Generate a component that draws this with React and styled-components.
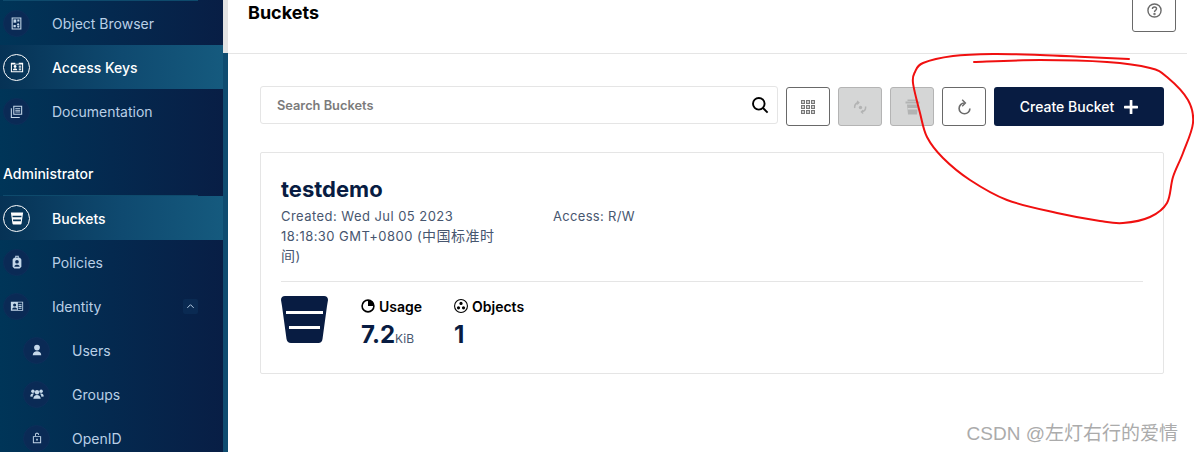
import React from "react";
import styled, { createGlobalStyle } from "styled-components";

const Global = createGlobalStyle`
  html, body { margin: 0; padding: 0; height: 452px; overflow: hidden; background: #fff; }
  * { box-sizing: border-box; }
  body { font-family: Inter, "Noto Sans CJK SC", sans-serif; }
`;

const Page = styled.div`
  display: flex;
  width: 1194px;
  height: 452px;
  overflow: hidden;
  position: relative;
  background: #fff;
`;

const Sidebar = styled.aside`
  flex: 0 0 228px;
  height: 452px;
  display: flex;
  background: #0f4c70;
`;

const SideInner = styled.nav`
  flex: 0 0 223px;
  height: 452px;
  overflow: hidden;
  background: linear-gradient(90deg, #003558 0%, #04294f 50%, #081e45 100%);
`;

const SideGutter = styled.div`
  flex: 1;
  height: 53px;
  background: #e3e3e3;
`;

const Rule = styled.div`
  height: 1px;
  width: 195px;
  margin-left: 3px;
  background: #0e4a6c;
`;

const Row = styled.div`
  height: 44px;
  display: flex;
  align-items: center;
  padding-left: ${(p) => (p.$sub ? 23 : 3)}px;
  background: ${(p) => (p.$active ? "linear-gradient(90deg, #063255 0%, #0f4a70 55%, #155a7e 100%)" : "transparent")};
  color: ${(p) => (p.$active ? "#ffffff" : "#b9cfe6")};
  font-size: 14px;
  font-weight: ${(p) => (p.$active ? 500 : 400)};
`;

const Badge = styled.span`
  flex: 0 0 27px;
  width: 27px;
  height: 27px;
  border-radius: 50%;
  display: flex;
  align-items: center;
  justify-content: center;
  margin-right: 22px;
  background: ${(p) => (p.$active ? "transparent" : "#0a2a55")};
  border: 1px solid ${(p) => (p.$active ? "#ffffff" : "#0c2f5a")};
  color: ${(p) => (p.$active ? "#ffffff" : "#c5d8ea")};
  svg { display: block; }
`;

const RowLabel = styled.span`
  flex: 1;
`;

const Chevron = styled.span`
  width: 15px;
  height: 15px;
  margin-right: 25px;
  border-radius: 2px;
  background: #0a2a52;
  display: flex;
  align-items: center;
  justify-content: center;
  color: #b9cfe6;
`;

const SectionLabel = styled.div`
  height: 62px;
  display: flex;
  align-items: flex-end;
  padding: 0 0 13px 3px;
  color: #fff;
  font-size: 14px;
  font-weight: 500;
`;

const Main = styled.main`
  flex: 1;
  min-width: 0;
  display: flex;
  flex-direction: column;
`;

const Header = styled.header`
  height: 54px;
  min-height: 54px;
  flex: none;
  width: 959px;
  border-bottom: 1px solid #e5e5e5;
  display: flex;
  align-items: flex-end;
  justify-content: space-between;
  padding: 0 11px 21px 20px;
`;

const Title = styled.h1`
  margin: 0;
  font-size: 18px;
  line-height: 22px;
  font-weight: 700;
  color: #000;
  align-self: flex-start;
  padding-top: 2px;
`;

const IconButton = styled.button`
  flex: 0 0 44px;
  width: 44px;
  height: ${(p) => p.$h || 39}px;
  padding: 0;
  border-radius: 3px;
  border: 1px solid ${(p) => (p.$disabled ? "#b4b4b4" : "#696969")};
  background: ${(p) => (p.$disabled ? "#d5d6d6" : "#fff")};
  color: ${(p) => (p.$disabled ? "#b2b3b3" : "#6b6b6b")};
  display: flex;
  align-items: center;
  justify-content: center;
`;

const Content = styled.div`
  padding: 32px 30px 0 32px;
  display: flex;
  flex-direction: column;
`;

const Toolbar = styled.div`
  display: flex;
  gap: 8px;
  height: 40px;
  width: 904px;
  align-items: flex-start;
`;

const Search = styled.div`
  flex: 0 0 518px;
  height: 38px;
  border: 1px solid #e5e5e5;
  border-radius: 3px;
  display: flex;
  align-items: center;
  justify-content: space-between;
  padding: 0 8px 0 16px;
  color: #7b7b7b;
  font-size: 12.8px;
  font-weight: 600;
`;

const ToolGroup = styled.div`
  display: flex;
  gap: 8px;
  margin-top: 1px;
`;

const CreateButton = styled.button`
  width: 170px;
  height: 39px;
  border: 0;
  border-radius: 3px;
  background: #081c42;
  color: #fff;
  font-family: inherit;
  font-size: 14px;
  font-weight: 500;
  display: flex;
  align-items: center;
  justify-content: center;
  gap: 10px;
  padding: 0;
`;

const Card = styled.section`
  width: 904px;
  height: 222px;
  margin-top: 26px;
  border: 1px solid #e5e5e5;
  border-radius: 2px;
  padding: 20px;
  color: #081c42;
`;

const BucketName = styled.h2`
  margin: 0;
  font-size: 22px;
  line-height: 32px;
  font-weight: 700;
  color: #081c42;
`;

const MetaRow = styled.div`
  display: flex;
  height: 76px;
  font-size: 13px;
  line-height: 20px;
  color: #47566f;
`;

const Created = styled.div`
  flex: 0 0 220px;
  margin-top: 1px;
  margin-right: 52px;
  letter-spacing: 0.45px;
`;

const Cjk = styled.span`
  font-size: 14px;
`;

const Access = styled.div`
  margin-top: 1px;
  letter-spacing: 0.32px;
`;

const StatsRow = styled.div`
  border-top: 1px solid #e5e5e5;
  display: flex;
  padding-top: 14px;
  height: 80px;
`;

const BucketArt = styled.div`
  flex: 0 0 47px;
  margin-right: 33px;
  color: #081c42;
`;

const Stat = styled.div`
  width: ${(p) => p.$w}px;
  display: flex;
  flex-direction: column;
`;

const StatLabel = styled.div`
  display: flex;
  align-items: center;
  gap: 4px;
  height: 20px;
  color: #000;
  font-size: 14px;
  font-weight: 600;
`;

const StatValue = styled.div`
  margin-top: 4px;
  font-size: 24px;
  line-height: 30px;
  font-weight: 700;
  color: #081c42;
  display: flex;
  align-items: baseline;
`;

const Unit = styled.span`
  font-size: 12px;
  font-weight: 400;
  color: #47566f;
`;

const Annotation = styled.svg`
  position: absolute;
  left: 0;
  top: 0;
  pointer-events: none;
`;

const Watermark = styled.div`
  position: absolute;
  right: 16px;
  bottom: 6px;
  font-family: "Liberation Sans", "Noto Sans CJK SC", sans-serif;
  font-size: 19px;
  line-height: 24px;
  color: #ababab;
`;

const Glyph = ({ children, size = 14, box = 16 }) => (
  <svg width={size} height={size} viewBox={`0 0 ${box} ${box}`} fill="currentColor">{children}</svg>
);

const ObjectIcon = () => (
  <Glyph size={13}>
    <path fillRule="evenodd" d="M2 0.500h12v15H2zM3.300 1.800v12.400h9.400V1.800z" />
    <rect x="4.300" y="3" width="3.400" height="4" /><rect x="9" y="3" width="2.600" height="2.600" />
    <path d="M10 7.200l2 3h-4z" /><rect x="4.300" y="9.800" width="2.800" height="2.800" /><circle cx="10.200" cy="11.800" r="1.400" />
  </Glyph>
);
const KeysIcon = () => (
  <Glyph size={14}>
    <path fillRule="evenodd" d="M1 3h5v1.200h4V3h5v11H1zM2.200 5.200v7.600h11.600V5.200z" />
    <circle cx="5.800" cy="7.400" r="1.600" /><path d="M3.200 11.800c0-3.200 5.200-3.200 5.200 0z" />
    <rect x="10" y="6.500" width="2.800" height="1.200" /><rect x="10" y="8.500" width="2.800" height="1.200" /><rect x="10" y="10.500" width="2.800" height="1.200" />
  </Glyph>
);
const DocsIcon = () => (
  <Glyph size={13}>
    <path fillRule="evenodd" d="M4 1h11v11H4zM5.300 2.300v8.400h8.400V2.300z" />
    <path d="M1 4h1.300v10.700H12V16H1z" />
    <rect x="6.500" y="4" width="6" height="1.100" /><rect x="6.500" y="6" width="6" height="1.100" /><rect x="6.500" y="8" width="6" height="1.100" />
  </Glyph>
);
const BucketSmall = () => (
  <Glyph size={14}>
    <path fillRule="evenodd" d="M1 1.800h14l-1.800 12.600c-.1.700-.5 1.100-1.200 1.100H4c-.7 0-1.100-.4-1.200-1.100zM2.800 5.300l.2 1.800h10l.2-1.800zM3.400 9.800l.2 1.800h8.800l.2-1.800z" />
  </Glyph>
);
const PolicyIcon = () => (
  <Glyph size={14}>
    <path fillRule="evenodd" d="M6 .8h4v2.400h1.500L13 5v8.300L11 15.500H5L3 13.300V5l1.500-1.800H6zM7.200 2v1.200h1.600V2zM8 5.600a2.100 2.100 0 100 4.200 2.100 2.100 0 000-4.200zM5 13.300h6c0-2.800-6-2.800-6 0z" />
  </Glyph>
);
const IdentityIcon = () => (
  <Glyph size={14}>
    <path fillRule="evenodd" d="M1 3h14v10.500H1zM9.700 6v1h3.500V6zM9.700 8v1h3.500V8zM9.700 10v1h3.500v-1zM5.300 5a1.800 1.800 0 100 3.600 1.800 1.800 0 000-3.600zM2.500 12h5.600c0-2.900-5.600-2.900-5.600 0zM9 4v8.500h5V4z" />
  </Glyph>
);
const UserIcon = () => (
  <Glyph size={12}>
    <circle cx="8" cy="4.800" r="3.800" /><path d="M2.300 15c0-4 2.700-5.500 5.700-5.500s5.700 1.500 5.700 5.500z" />
  </Glyph>
);
const GroupIcon = () => (
  <Glyph size={14}>
    <circle cx="8" cy="6" r="2.500" /><path d="M3.800 13.500c0-3 2-4.400 4.200-4.400s4.200 1.400 4.200 4.400z" />
    <circle cx="3.300" cy="4.800" r="2" /><circle cx="12.700" cy="4.800" r="2" />
    <path d="M.3 10.800c0-2.300 1.200-3.400 2.900-3.400.5 0 .9.100 1.300.300C3.500 8.700 3 9.700 3 11.200zM15.700 10.800c0-2.300-1.200-3.400-2.900-3.400-.5 0-.9.100-1.300.300.9 1 1.500 2 1.500 3.500z" />
  </Glyph>
);
const LockIcon = () => (
  <Glyph size={12}>
    <path fillRule="evenodd" d="M2.500 5.500h11V15h-11zM3.800 6.800v7h8.400v-7z" />
    <path d="M5.300 5.500V3.400C5.300 1.800 6.500 1 8 1s2.700.800 2.700 2.400v.6H9.500v-.6C9.500 2.600 8.800 2.200 8 2.200s-1.500.400-1.500 1.200v2.100z" />
    <rect x="7" y="9" width="2" height="2.400" />
  </Glyph>
);
const UpIcon = () => (
  <svg width="9" height="9" viewBox="0 0 10 10" fill="none" stroke="currentColor" strokeWidth="1.100"><path d="M1.500 6.500L5 3l3.500 3.500" /></svg>
);
const HelpIcon = () => (
  <svg width="15" height="15" viewBox="0 0 16 16" fill="none" stroke="currentColor" strokeWidth="1.500">
    <circle cx="8" cy="8" r="7" />
    <path d="M5.800 6.300c0-1.400 1-2.100 2.200-2.100s2.200.800 2.200 2c0 1.700-2.200 1.600-2.200 3.300" />
    <circle cx="8" cy="11.700" r=".5" />
  </svg>
);
const SearchIcon = () => (
  <svg width="18" height="18" viewBox="0 0 18 18" fill="none" stroke="#000" strokeWidth="1.900">
    <circle cx="7.800" cy="7.800" r="5.800" /><path d="M12 12l4.600 4.600" />
  </svg>
);
const GridIcon = () => (
  <svg width="14" height="14" viewBox="0 0 14 14" fill="none" stroke="#777" strokeWidth="1.200">
    {[0, 5, 10].flatMap((y) => [0, 5, 10].map((x) => <rect key={`${x}-${y}`} x={x + 0.6} y={y + 0.6} width="2.800" height="2.800" />))}
  </svg>
);
const SyncIcon = () => (
  <svg width="14" height="14" viewBox="0 0 14 14" fill="none" stroke="currentColor" strokeWidth="1.500">
    <circle cx="7.500" cy="7.500" r="1.700" fill="currentColor" stroke="none" />
    <path d="M1.800 8c-.5-2.500.7-4.500 3.500-5.500M12.500 6.500c.5 2.500-.7 4.500-3.500 5.500" />
    <path d="M4 .8l2 1.700-1.700 2M10.200 13.500L8.200 12l1.700-2" strokeWidth="1.100" />
  </svg>
);
const TrashIcon = () => (
  <svg width="15" height="16" viewBox="0 0 15 16" fill="currentColor">
    <path d="M2.500 .5h10v1.500h-10zM.5 2.500h14v2H.5z" /><path fillRule="evenodd" d="M2 5.500h11l-1 10H3zM2.800 9v1.400h9.400V9z" />
  </svg>
);
const RefreshIcon = () => (
  <svg width="15" height="16" viewBox="0 0 15 16" fill="none" stroke="currentColor" strokeWidth="1.600">
    <path d="M7.500 4A5.400 5.400 0 1 0 12.900 9.400" />
    <path d="M5.200 .8L8.400 4 5.200 7.200" strokeWidth="1.400" />
  </svg>
);
const PlusIcon = () => (
  <svg width="14" height="14" viewBox="0 0 14 14" fill="#fff">
    <rect x="5.700" y="0" width="2.700" height="14" rx=".6" /><rect x="0" y="5.700" width="14" height="2.700" rx=".6" />
  </svg>
);
const BigBucket = () => (
  <svg width="47" height="47" viewBox="0 0 47 47" fill="currentColor">
    <path fillRule="evenodd" d="M4 0h39c2.500 0 4 1.500 4 4l-1 6-4.500 33c-.3 2.500-1.800 4-4 4H10c-2.500 0-4-1.500-4.500-4L1 10 0 4c0-2.500 1.500-4 4-4zM5 15v3h37v-3zM8 30v3h31v-3z" />
  </svg>
);
const PieIcon = () => (
  <svg width="14" height="14" viewBox="0 0 14 14" fill="none">
    <circle cx="7" cy="7" r="5.900" stroke="#000" strokeWidth="1.600" />
    <path d="M7 1v6h6A6 6 0 007 1z" fill="#000" />
  </svg>
);
const ObjectsIcon = () => (
  <svg width="14" height="14" viewBox="0 0 14 14" fill="#000">
    <path fillRule="evenodd" d="M7 0a7 7 0 110 14A7 7 0 017 0zm0 1.100a5.900 5.900 0 100 11.800A5.900 5.900 0 007 1.100z" />
    <circle cx="7" cy="4.400" r="1.600" /><circle cx="4.500" cy="8.800" r="1.600" /><circle cx="9.500" cy="8.800" r="1.600" />
  </svg>
);

const loop = [
  [1129, 59], [1085, 57], [1040, 55], [993, 54], [953, 56], [923, 63], [915, 72], [913, 83], [920, 113], [927, 137],
  [943, 158], [970, 180], [1007, 200], [1057, 213], [1100, 221], [1123, 223], [1150, 217], [1167, 203], [1173, 177],
  [1183, 153], [1193, 123], [1188, 100], [1167, 77], [1150, 68], [1107, 62], [1040, 60], [974, 62],
];

const smooth = (pts) => {
  let d = `M${pts[0][0]} ${pts[0][1]}`;
  for (let i = 0; i < pts.length - 1; i++) {
    const p0 = pts[i - 1] || pts[i];
    const p1 = pts[i];
    const p2 = pts[i + 1];
    const p3 = pts[i + 2] || p2;
    const c1x = p1[0] + (p2[0] - p0[0]) / 6;
    const c1y = p1[1] + (p2[1] - p0[1]) / 6;
    const c2x = p2[0] - (p3[0] - p1[0]) / 6;
    const c2y = p2[1] - (p3[1] - p1[1]) / 6;
    d += ` C${c1x} ${c1y} ${c2x} ${c2y} ${p2[0]} ${p2[1]}`;
  }
  return d;
};

const NavRow = ({ icon, label, active, sub, chevron }) => (
  <Row $active={active} $sub={sub}>
    <Badge $active={active}>{icon}</Badge>
    <RowLabel>{label}</RowLabel>
    {chevron && <Chevron><UpIcon /></Chevron>}
  </Row>
);

export default function App() {
  return (
    <Page>
      <Global />
      <Sidebar>
        <SideInner>
          <Rule />
          <NavRow icon={<ObjectIcon />} label="Object Browser" />
          <NavRow icon={<KeysIcon />} label="Access Keys" active />
          <NavRow icon={<DocsIcon />} label="Documentation" />
          <SectionLabel>Administrator</SectionLabel>
          <Rule />
          <NavRow icon={<BucketSmall />} label="Buckets" active />
          <NavRow icon={<PolicyIcon />} label="Policies" />
          <NavRow icon={<IdentityIcon />} label="Identity" chevron />
          <NavRow icon={<UserIcon />} label="Users" sub />
          <NavRow icon={<GroupIcon />} label="Groups" sub />
          <NavRow icon={<LockIcon />} label="OpenID" sub />
        </SideInner>
        <SideGutter />
      </Sidebar>
      <Main>
        <Header>
          <Title>Buckets</Title>
          <IconButton $h={44} aria-label="Help"><HelpIcon /></IconButton>
        </Header>
        <Content>
          <Toolbar>
            <Search>
              <span>Search Buckets</span>
              <SearchIcon />
            </Search>
            <ToolGroup>
              <IconButton aria-label="Grid"><GridIcon /></IconButton>
              <IconButton $disabled aria-label="Sync"><SyncIcon /></IconButton>
              <IconButton $disabled aria-label="Delete"><TrashIcon /></IconButton>
              <IconButton aria-label="Refresh"><RefreshIcon /></IconButton>
              <CreateButton>Create Bucket <PlusIcon /></CreateButton>
            </ToolGroup>
          </Toolbar>
          <Card>
            <BucketName>testdemo</BucketName>
            <MetaRow>
              <Created>Created: Wed Jul 05 2023 18:18:30 GMT+0800 (<Cjk>中国标准时间</Cjk>)</Created>
              <Access>Access: R/W</Access>
            </MetaRow>
            <StatsRow>
              <BucketArt><BigBucket /></BucketArt>
              <Stat $w={93}>
                <StatLabel><PieIcon /> Usage</StatLabel>
                <StatValue>7.2<Unit>KiB</Unit></StatValue>
              </Stat>
              <Stat $w={100}>
                <StatLabel><ObjectsIcon /> Objects</StatLabel>
                <StatValue>1</StatValue>
              </Stat>
            </StatsRow>
          </Card>
        </Content>
      </Main>
      <Annotation width="1194" height="452" viewBox="0 0 1194 452" fill="none">
        <path d={smooth(loop)} stroke="#f01010" strokeWidth="2" strokeLinecap="round" />
      </Annotation>
      <Watermark>CSDN @左灯右行的爱情</Watermark>
    </Page>
  );
}
